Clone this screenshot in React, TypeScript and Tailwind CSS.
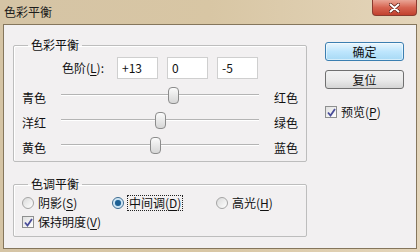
import React from 'react';

const font = "font-['Noto_Sans_CJK_SC','Microsoft_YaHei',sans-serif]";

const sliders = [
  { left: '青色', right: '红色', value: 13 },
  { left: '洋红', right: '绿色', value: 0 },
  { left: '黄色', right: '蓝色', value: -5 },
];

const Mn: React.FC<{ k: string }> = ({ k }) => (
  <span className="underline underline-offset-2">{k}</span>
);

const CheckBox: React.FC = () => (
  <span className="w-[12px] h-[12px] border border-[#8e8f8f] bg-gradient-to-br from-[#e0e0e0] to-white flex items-center justify-center shrink-0">
    <svg width="9" height="9" viewBox="0 0 9 9">
      <path d="M1 4.5 L3.5 7.5 L8 1" fill="none" stroke="#4a4d9a" strokeWidth="1.8" />
    </svg>
  </span>
);

const Radio: React.FC<{ on?: boolean }> = ({ on }) => (
  <span
    className={`w-[12px] h-[12px] rounded-full border flex items-center justify-center shrink-0 ${
      on ? 'border-[#3b6a90] bg-[#dcecf7]' : 'border-[#a4a4a4] bg-gradient-to-br from-[#dadada] to-white'
    }`}
  >
    {on && <span className="w-[6px] h-[6px] rounded-full bg-[#1d5f93] shadow-[0_0_2px_#6fb3e0]" />}
  </span>
);

const Slider: React.FC<{ value: number }> = ({ value }) => {
  const pos = ((value + 100) / 200) * 198 - 5;
  return (
    <div className="relative w-[198px] h-[25px]">
      <div className="absolute left-0 right-0 top-[9px] h-[1px] bg-[#b4b4b4] shadow-[0_1px_0_#ffffff]" />
      <div
        className="absolute top-[2px] w-[11px] h-[17px] rounded-[4px] border border-[#8c8c8c] bg-gradient-to-b from-[#fbfbfb] to-[#d6d6d6]"
        style={{ left: pos }}
      />
    </div>
  );
};

export default function App() {
  return (
    <div className={`w-[420px] h-[252px] flex flex-col bg-gradient-to-r from-[#d5c4a5] via-[#d8c6a4] to-[#e4d5ba] text-[12px] text-[#111] ${font}`}>
      <div className="h-[24px] flex items-start justify-between pl-[4px] pr-[3px]">
        <span className="mt-[4px] leading-[16px] text-[#1c1c1c]">色彩平衡</span>
        <div className="w-[45px] h-[16px] rounded-b-[4px] border border-t-0 border-[#8a3b2f] bg-gradient-to-b from-[#e9a596] via-[#d66451] to-[#c2412e] flex items-center justify-center">
          <svg width="11" height="10" viewBox="0 0 11 10">
            <path d="M1.5 1.5 L9.5 8.5 M9.5 1.5 L1.5 8.5" stroke="#5a1a12" strokeWidth="3.4" strokeLinecap="round" />
            <path d="M1.5 1.5 L9.5 8.5 M9.5 1.5 L1.5 8.5" stroke="#ffffff" strokeWidth="2" strokeLinecap="round" />
          </svg>
        </div>
      </div>
      <div className="mx-[3px] mb-[3px] flex-1 border border-[#85765c] bg-[#f2f0f1] flex">
        <div className="pl-[9px] pt-[12px] flex flex-col">
          <fieldset className="w-[294px] h-[125px] border border-[#bdbdbd] rounded-[2px] shadow-[inset_1px_1px_0_#ffffff]">
            <legend className="ml-[14px] px-[3px] leading-[16px]">色彩平衡</legend>
            <div className="mt-[4px] h-[22px] flex items-center pl-[48px]">
              <span className="w-[55px]">
                色阶(<Mn k="L" />):
              </span>
              <div className="flex gap-[9px]">
                {['+13', '0', '-5'].map((v) => (
                  <div key={v} className="w-[41px] h-[22px] bg-white border border-[#cfcfcf] flex items-center pl-[4px]">
                    {v}
                  </div>
                ))}
              </div>
            </div>
            <div className="mt-[6px] flex flex-col">
              {sliders.map((s) => (
                <div key={s.left} className="h-[25px] flex items-center pl-[8px]">
                  <span className="w-[39px]">{s.left}</span>
                  <Slider value={s.value} />
                  <span className="ml-[15px]">{s.right}</span>
                </div>
              ))}
            </div>
          </fieldset>
          <fieldset className="mt-[14px] w-[294px] h-[61px] border border-[#bdbdbd] rounded-[2px] shadow-[inset_1px_1px_0_#ffffff]">
            <legend className="ml-[14px] px-[3px] leading-[16px]">色调平衡</legend>
            <div className="mt-[3px] h-[16px] flex items-center pl-[8px]">
              <div className="w-[90px] flex items-center gap-[4px]">
                <Radio />
                <span>
                  阴影(<Mn k="S" />)
                </span>
              </div>
              <div className="w-[104px] flex items-center gap-[3px]">
                <Radio on />
                <span className="border border-dotted border-[#222] px-[1px] leading-[14px]">
                  中间调(<Mn k="D" />)
                </span>
              </div>
              <div className="flex items-center gap-[4px]">
                <Radio />
                <span>
                  高光(<Mn k="H" />)
                </span>
              </div>
            </div>
            <div className="mt-[3px] h-[16px] flex items-center pl-[8px] gap-[4px]">
              <CheckBox />
              <span>
                保持明度(<Mn k="V" />)
              </span>
            </div>
          </fieldset>
        </div>
        <div className="ml-[18px] pt-[17px] flex flex-col">
          <button className="w-[79px] h-[19px] rounded-[3px] border border-[#3c7fb1] bg-gradient-to-b from-[#eaf6fd] via-[#bee6fd] to-[#a7d9f5] shadow-[inset_0_0_0_1px_#ffffff80] leading-[16px]">
            确定
          </button>
          <button className="mt-[9px] w-[79px] h-[19px] rounded-[3px] border border-[#707070] bg-gradient-to-b from-[#f2f2f2] via-[#ebebeb] to-[#d5d5d5] leading-[16px]">
            复位
          </button>
          <div className="mt-[14px] flex items-center gap-[4px]">
            <CheckBox />
            <span>
              预览(<Mn k="P" />)
            </span>
          </div>
        </div>
      </div>
    </div>
  );
}
